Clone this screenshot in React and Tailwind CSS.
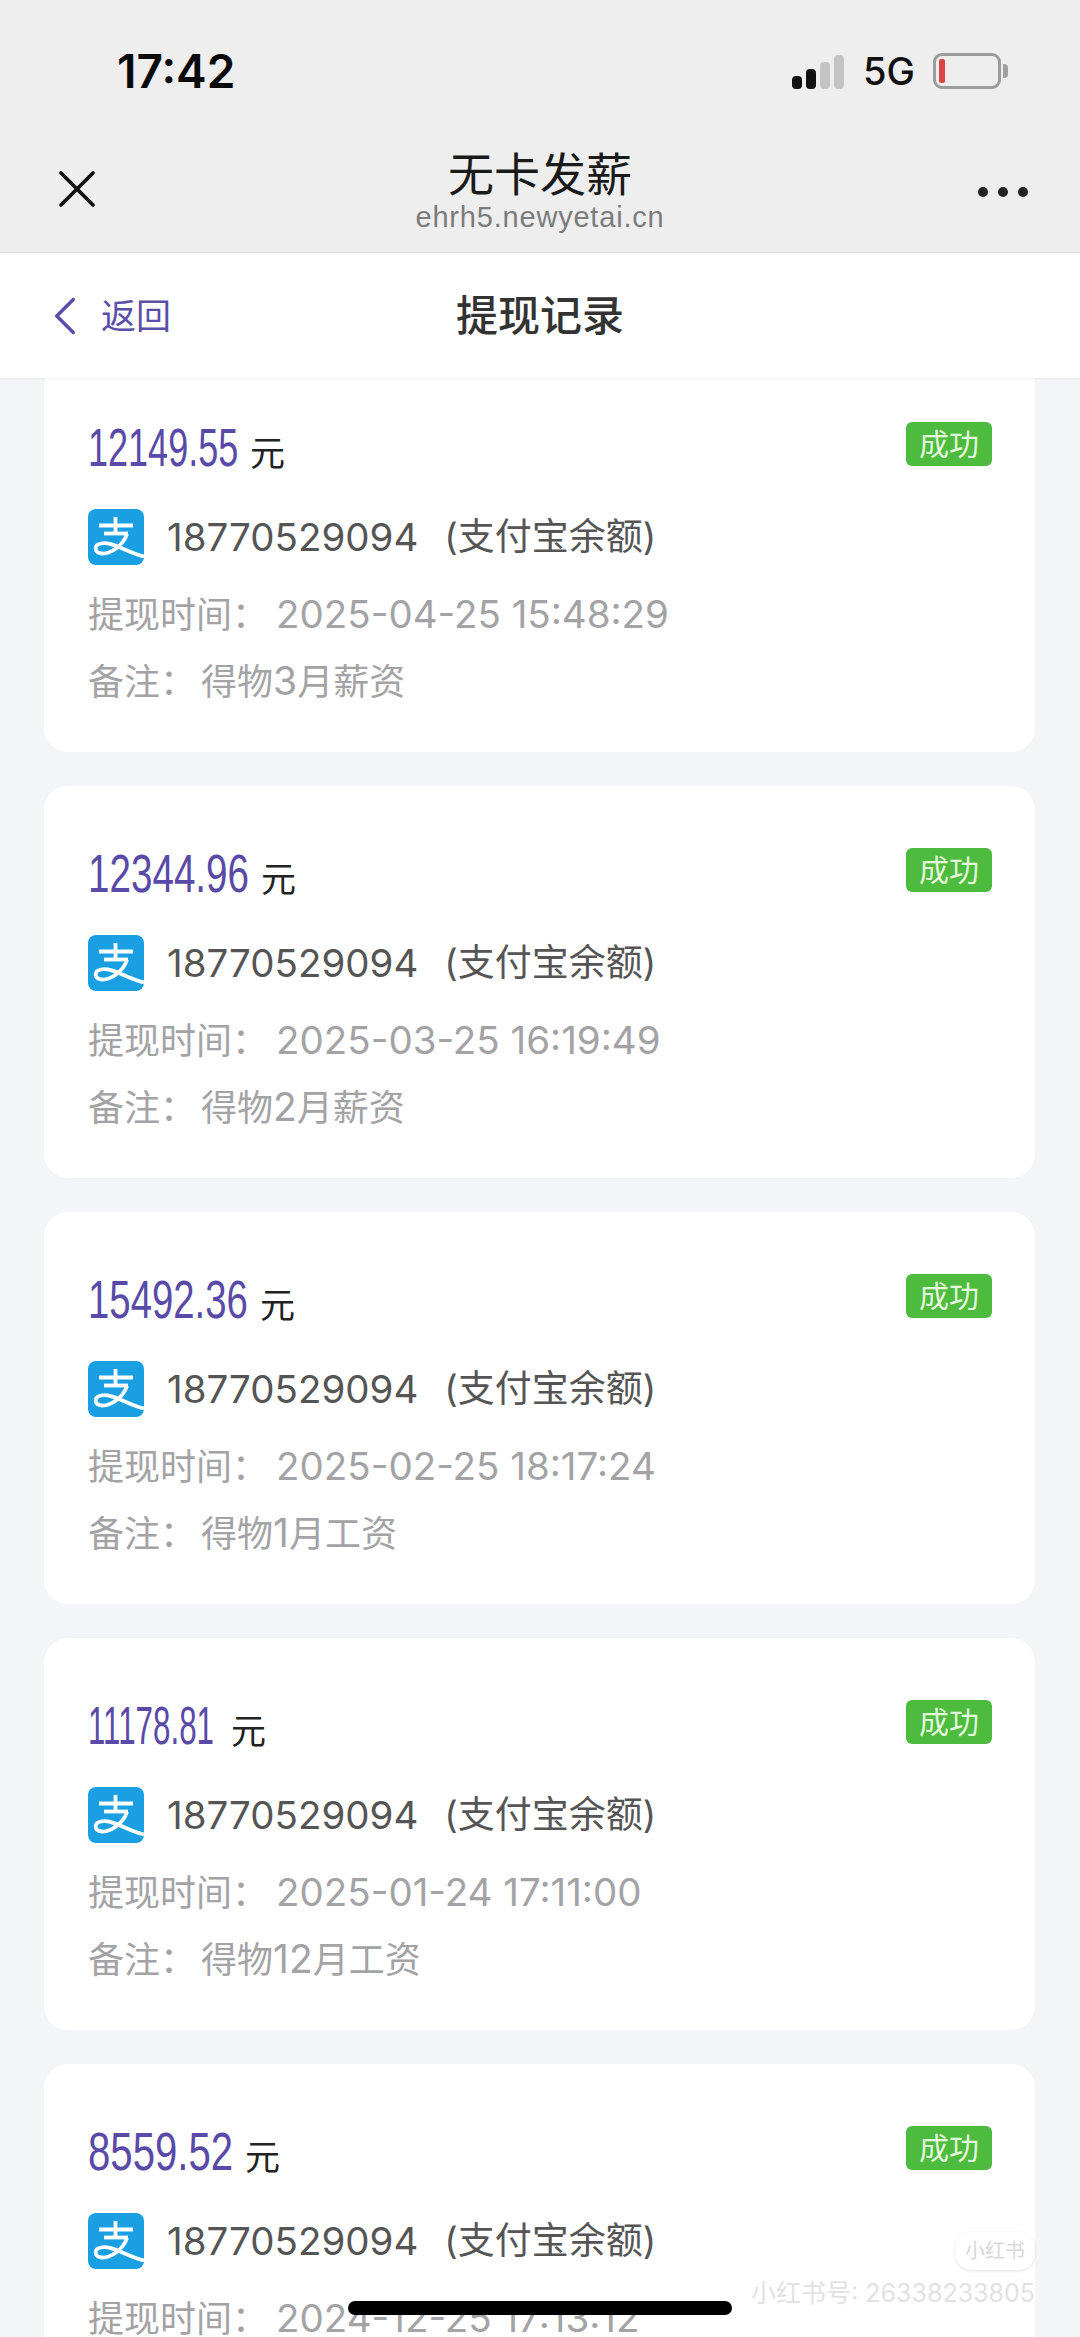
import React from 'react';
import { ChevronLeft, X } from 'lucide-react';

const records = [
  { amount: '12149.55', box: 'w-[150px]', squeeze: 'scale-x-[0.667]', time: '2025-04-25 15:48:29', note: ['得物', '3', '月薪资'] },
  { amount: '12344.96', box: 'w-[161px]', squeeze: 'scale-x-[0.715]', time: '2025-03-25 16:19:49', note: ['得物', '2', '月薪资'] },
  { amount: '15492.36', box: 'w-[160px]', squeeze: 'scale-x-[0.71]', time: '2025-02-25 18:17:24', note: ['得物', '1', '月工资'] },
  { amount: '11178.81', box: 'w-[131px]', squeeze: 'scale-x-[0.58]', time: '2025-01-24 17:11:00', note: ['得物', '12', '月工资'] },
  { amount: '8559.52', box: 'w-[145px]', squeeze: 'scale-x-[0.743]', time: '2024-12-25 17:13:12', note: ['得物', '11', '月工资'] },
];

const cjk = "font-['Inter','Noto_Sans_CJK_SC',sans-serif]";

function AlipayIcon() {
  return (
    <svg width="56" height="56" viewBox="0 0 56 56" className="shrink-0">
      <rect width="56" height="56" rx="8" fill="#1a9fe3" />
      <g fill="none" stroke="#fff" strokeWidth="3.8">
        <path d="M11 16.5H45" />
        <path d="M27.5 8V24" />
        <path d="M16 24.5H40" />
        <path d="M39 25C35 37 22 45 14 44.5C6 44 5.5 36 13 34.5C24 32 38 43 56 47.5" />
      </g>
    </svg>
  );
}

function RecordCard({ record }) {
  return (
    <div className="h-[392px] rounded-3xl bg-white pl-11 pr-[43px] pt-[60px]">
      <div className="flex items-start justify-between">
        <div className="flex items-baseline pt-0.5">
          <span className={`${record.box} inline-block whitespace-nowrap`}>
            <span className={`${record.squeeze} inline-block origin-left font-['Liberation_Sans',sans-serif] text-[54px] leading-[50px] text-[#5a4aa8]`}>
              {record.amount}
            </span>
          </span>
          <span className={`ml-[12px] ${cjk} text-[35px] leading-[40px] text-[#222]`}>元</span>
        </div>
        <span className={`mt-[2px] flex h-[44px] w-[86px] items-center justify-center rounded-md bg-[#4dbb3e] ${cjk} text-[30px] text-[#e4f7dc]`}>成功</span>
      </div>
      <div className="mt-[36px] flex items-center">
        <AlipayIcon />
        <span className={`ml-[23px] ${cjk} text-[38.5px] leading-[56px] text-[#555]`}>18770529094</span>
        <span className={`ml-[26px] ${cjk} text-[37px] leading-[56px] text-[#555]`}>(支付宝余额)</span>
      </div>
      <div className={`mt-[21px] flex items-baseline ${cjk} text-[36px] leading-[56px] text-[#a3a3a6]`}>
        <span>提现时间：</span>
        <span className="ml-[8px] text-[38.5px]">{record.time}</span>
      </div>
      <div className={`mt-[10px] flex items-baseline ${cjk} text-[36px] leading-[56px] text-[#a3a3a6]`}>
        <span>备注：</span>
        <span className="ml-[5px]">
          {record.note[0]}
          <span className="text-[39px]">{record.note[1]}</span>
          {record.note[2]}
        </span>
      </div>
    </div>
  );
}

export default function App() {
  return (
    <div className="relative h-[2337px] w-[1080px] overflow-hidden bg-[#f4f5f7]">
      <div className="relative z-10 h-[253px] border-b border-[#dcdcdc] bg-[#eeeeee]">
        <div className="flex items-start justify-between pl-[117px] pr-[79px] pt-[43px]">
          <span className="font-['Inter',sans-serif] text-[46px] leading-[56px] font-semibold text-[#0a0a0a]">17:42</span>
          <div className="flex items-center pt-[8px]">
            <div className="flex h-[36px] items-end gap-[4px]">
              <span className="h-[13px] w-[10px] rounded-[4px] bg-[#111]" />
              <span className="h-[20px] w-[10px] rounded-[4px] bg-[#111]" />
              <span className="h-[27px] w-[10px] rounded-[4px] bg-[#c4c4c4]" />
              <span className="h-[34px] w-[10px] rounded-[4px] bg-[#c4c4c4]" />
            </div>
            <span className="ml-[19px] font-['Inter',sans-serif] text-[38px] leading-[40px] font-medium text-[#111]">5G</span>
            <div className="relative ml-[18px] h-[36px] w-[68px] rounded-[9px] border-[3px] border-[#9c9c9c] p-[3px]">
              <div className="h-full w-[6px] rounded-[2px] bg-[#dd4444]" />
              <span className="absolute top-[8px] -right-[10px] h-[14px] w-[5px] rounded-r bg-[#a0a0a0]" />
            </div>
          </div>
        </div>
        <div className="relative mt-[47px] text-center">
          <X className="absolute top-[11px] left-[45px] h-[64px] w-[64px] text-[#111]" strokeWidth={1.4} />
          <div className={`${cjk} text-[46px] leading-[56px] text-[#1a1a1a]`}>无卡发薪</div>
          <div className="-mt-[2px] font-['Liberation_Sans',sans-serif] text-[29px] leading-[34px] tracking-[0.8px] text-[#7c7c7c]">ehrh5.newyetai.cn</div>
          <div className="absolute top-[41px] right-[52px] flex gap-[10px]">
            <span className="h-[10px] w-[10px] rounded-full bg-[#222]" />
            <span className="h-[10px] w-[10px] rounded-full bg-[#222]" />
            <span className="h-[10px] w-[10px] rounded-full bg-[#222]" />
          </div>
        </div>
      </div>

      <div className="relative z-10 flex h-[125px] items-center justify-center bg-white shadow-[0_1px_2px_rgba(0,0,0,0.05)]">
        <div className="absolute left-[32px] flex items-center">
          <ChevronLeft className="h-[66px] w-[66px] text-[#5a4fa8]" strokeWidth={1.3} />
          <span className={`ml-[3px] ${cjk} text-[35px] leading-[50px] text-[#5a4fa8]`}>返回</span>
        </div>
        <span className={`${cjk} text-[42px] leading-[56px] font-medium text-[#333]`}>提现记录</span>
      </div>

      <div className="-mt-[18px] flex flex-col gap-[34px] pl-[44px] pr-[45px]">
        {records.map((record) => (
          <RecordCard key={record.amount} record={record} />
        ))}
      </div>

      {/* 水印和底部条 */}
      <div className={`absolute top-[2232px] right-[45px] flex h-[38px] w-[80px] items-center justify-center rounded-[16px] bg-white shadow-[0_1px_3px_rgba(0,0,0,0.12)] ${cjk} text-[20px] text-[#d9d9d9]`}>小红书</div>
      <div className={`absolute top-[2278px] right-[45px] ${cjk} text-[25px] leading-[30px] text-[#e2e2e2]`}>小红书号: 26338233805</div>
      <div className="absolute top-[2301px] left-[348px] h-[14px] w-[384px] rounded-full bg-black" />
    </div>
  );
}
